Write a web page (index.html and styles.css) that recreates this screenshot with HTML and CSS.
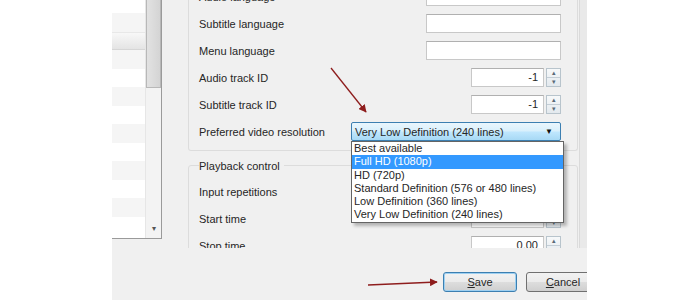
FILE: index.html
```html
<!DOCTYPE html>
<html lang="en">
<head>
  <meta charset="UTF-8" />
  <title>Preferences - Input / Codecs</title>
  <link rel="stylesheet" href="styles.css">
</head>
<body>

<div class="dialog">
  <div class="main">
    <div class="sidebar">
      <div class="cat-list">
        <div class="cat"></div>
        <div class="cat alt"></div>
        <div class="cat selected"></div>
        <div class="cat alt"></div>
        <div class="cat"></div>
        <div class="cat alt"></div>
        <div class="cat"></div>
        <div class="cat alt"></div>
        <div class="cat"></div>
        <div class="cat alt"></div>
        <div class="cat"></div>
        <div class="cat alt"></div>
        <div class="cat"></div>
      </div>
      <div class="scrollbar">
        <div class="thumb"></div>
        <div class="track"></div>
        <div class="down">&#9662;</div>
      </div>
    </div>

    <div class="settings">
      <div class="scroll-body">
        <div class="group">
          <div class="row">
            <span>Audio language</span>
            <input class="text" type="text">
          </div>
          <div class="row">
            <span>Subtitle language</span>
            <input class="text" type="text">
          </div>
          <div class="row">
            <span>Menu language</span>
            <input class="text" type="text">
          </div>
          <div class="row">
            <span>Audio track ID</span>
            <div class="spin"><span class="value">-1</span><span class="arrows"><i>&#9652;</i><i>&#9662;</i></span></div>
          </div>
          <div class="row">
            <span>Subtitle track ID</span>
            <div class="spin"><span class="value">-1</span><span class="arrows"><i>&#9652;</i><i>&#9662;</i></span></div>
          </div>
          <div class="row">
            <span>Preferred video resolution</span>
            <div class="combo">
              <span>Very Low Definition (240 lines)</span>
              <span class="caret">&#9660;</span>
              <ul class="popup">
                <li>Best available</li>
                <li class="current">Full HD (1080p)</li>
                <li>HD (720p)</li>
                <li>Standard Definition (576 or 480 lines)</li>
                <li>Low Definition (360 lines)</li>
                <li>Very Low Definition (240 lines)</li>
              </ul>
            </div>
          </div>
        </div>

        <div class="group titled">
          <div class="group-title">Playback control</div>
          <div class="row">
            <span>Input repetitions</span>
            <div class="spin"><span class="value">0</span><span class="arrows"><i>&#9652;</i><i>&#9662;</i></span></div>
          </div>
          <div class="row">
            <span>Start time</span>
            <div class="spin"><span class="value">0.00</span><span class="arrows"><i>&#9652;</i><i>&#9662;</i></span></div>
          </div>
          <div class="row">
            <span>Stop time</span>
            <div class="spin"><span class="value">0.00</span><span class="arrows"><i>&#9652;</i><i>&#9662;</i></span></div>
          </div>
        </div>
      </div>
      <div class="side-strip"></div>
    </div>
  </div>

  <div class="buttons">
    <button class="btn default"><u>S</u>ave</button>
    <button class="btn"><u>C</u>ancel</button>
  </div>
</div>

<!-- annotation arrows drawn over the screenshot -->
<svg class="notes" width="700" height="300" viewBox="0 0 700 300">
  <defs>
    <marker id="head" viewBox="0 0 10 10" refX="9" refY="5" markerWidth="6" markerHeight="6" orient="auto">
      <path d="M0,0 L10,5 L0,10 z" fill="#8e1d1d"/>
    </marker>
  </defs>
  <line x1="331" y1="68" x2="366" y2="112" stroke="#8e1d1d" stroke-width="1.3" marker-end="url(#head)"/>
  <line x1="368" y1="285" x2="437" y2="282" stroke="#8e1d1d" stroke-width="1.3" marker-end="url(#head)"/>
</svg>

</body>
</html>
```

FILE: styles.css
```css
body {
  margin: 0;
  width: 700px;
  height: 300px;
  overflow: hidden;
  background: #fff;
  font-family: 'Liberation Sans', Arial, sans-serif;
  font-size: 11px;
  color: #262626;
  position: relative;
}
.dialog {
  margin-left: 112px;
  width: 475px;
  height: 300px;
  background: #f0f0f0;
  display: flex;
  flex-direction: column;
  overflow: hidden;
}
.main {
  height: 248px;
  display: flex;
  overflow: hidden;
}

/* category list on the left */
.sidebar {
  width: 49px;
  height: 238px;
  display: flex;
  background: #fff;
  border-right: 1px solid #9a9a9a;
  border-bottom: 1px solid #9a9a9a;
  flex-shrink: 0;
}
.cat-list {
  flex: 1;
  margin-top: -5.5px;
  overflow: hidden;
}
.cat {
  height: 18.5px;
}
.cat.alt {
  background: #f5f5f5;
}
.cat.selected {
  background: linear-gradient(#f8f8f8, #e4e4e4);
  border-top: 1px solid #e8e8e8;
  border-bottom: 1px solid #d6d6d6;
  box-sizing: border-box;
}
.scrollbar {
  width: 15px;
  display: flex;
  flex-direction: column;
  background: #f3f3f3;
  border-left: 1px solid #e6e6e6;
}
.thumb {
  height: 88px;
  background: linear-gradient(90deg, #e2e2e2, #d4d4d4);
  border: 1px solid #b8b8b8;
  border-top: none;
  box-sizing: border-box;
}
.track {
  flex: 1;
}
.down {
  height: 16px;
  text-align: center;
  font-size: 8px;
  color: #555;
  line-height: 14px;
}

/* settings panel */
.settings {
  flex: 1;
  display: flex;
  overflow: hidden;
  padding-left: 26px;
}
.scroll-body {
  flex: 1;
  margin-top: -17px;
}
.side-strip {
  width: 7px;
  margin-left: 1px;
  background: #e9e9e9;
  border-left: 1px solid #dadada;
}
.group {
  border: 1px solid #dcdcdc;
  border-top: none;
  border-radius: 0 0 3px 3px;
  padding: 0 16px 5px 10px;
}
.group.titled {
  border-top: 1px solid #dcdcdc;
  border-radius: 3px;
  margin-top: 14px;
  padding-top: 0;
}
.group-title {
  width: fit-content;
  height: 14px;
  margin: -7px 0 5px;
  line-height: 14px;
  background: #f0f0f0;
  padding-right: 4px;
}
.row {
  height: 27px;
  display: flex;
  align-items: center;
  justify-content: space-between;
}
.text {
  width: 135px;
  height: 19px;
  box-sizing: border-box;
  border: 1px solid #c8c8c8;
  border-top-color: #b0b0b0;
  background: #fff;
  margin: 0;
}
.spin {
  width: 90px;
  height: 19px;
  display: flex;
  gap: 2px;
}
.spin .value {
  flex: 1;
  border: 1px solid #c8c8c8;
  border-top-color: #b0b0b0;
  background: #fff;
  text-align: right;
  padding-right: 5px;
  line-height: 17px;
}
.spin .arrows {
  width: 15px;
  display: flex;
  flex-direction: column;
  border: 1px solid #b8c4cc;
  background: linear-gradient(#f7f9fa, #e3e9ee);
  box-sizing: border-box;
}
.spin .arrows i {
  flex: 1;
  font-style: normal;
  font-size: 7px;
  line-height: 8px;
  text-align: center;
  color: #5a6a78;
}
.spin .arrows i + i {
  border-top: 1px solid #c4ced6;
}

/* combo box with open popup */
.combo {
  position: relative;
  width: 210px;
  height: 19px;
  box-sizing: border-box;
  border: 1px solid #3c7fb1;
  border-radius: 2px;
  background: linear-gradient(#eaf6fd 0%, #d9f0fc 45%, #bee6fd 55%, #a7d9f5 100%);
  display: flex;
  align-items: center;
  justify-content: space-between;
  padding: 0 7px 0 3px;
}
.combo .caret {
  font-size: 8px;
  color: #111;
}
.popup {
  position: absolute;
  left: -1px;
  top: 18px;
  width: 211px;
  margin: 0;
  padding: 0;
  list-style: none;
  background: #fff;
  border: 1px solid #646464;
  box-shadow: 3px 3px 3px rgba(0, 0, 0, 0.25);
  z-index: 2;
}
.popup li {
  height: 13.3px;
  line-height: 13px;
  padding-left: 2px;
}
.popup li.current {
  background: #3399ff;
  color: #fff;
}

/* bottom buttons */
.buttons {
  flex: 1;
  display: flex;
  gap: 9px;
  padding: 24px 0 0 331px;
}
.btn {
  width: 74px;
  height: 20px;
  flex-shrink: 0;
  font-family: 'Liberation Sans', Arial, sans-serif;
  font-size: 11px;
  color: #262626;
  border: 1px solid #707070;
  border-radius: 3px;
  background: linear-gradient(#f2f2f2 0%, #ebebeb 48%, #dddddd 52%, #cfcfcf 100%);
  padding: 0;
}
.btn.default {
  border-color: #3c7fb1;
  box-shadow: inset 0 0 0 1px #9ed0f1;
}
.notes {
  position: absolute;
  left: 0;
  top: 0;
  pointer-events: none;
}
```
